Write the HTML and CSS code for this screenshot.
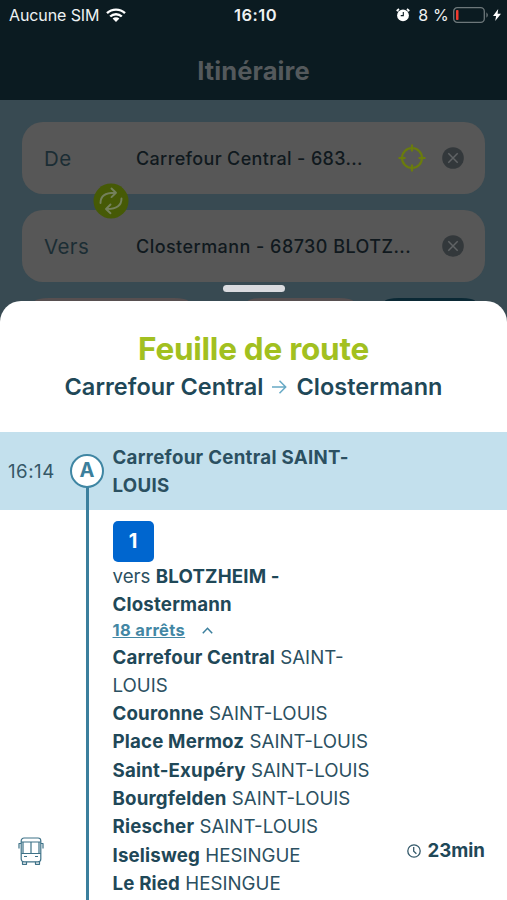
FILE: index.html
```html
<!DOCTYPE html>
<html lang="fr">
<head>
<meta charset="utf-8">
<title>Itinéraire</title>
<link rel="stylesheet" href="styles.css">
</head>
<body>
<div class="app">
  <header class="header">
    <div class="status">
      <div class="status-left">
        <span class="carrier">Aucune SIM</span>
        <svg class="wifi" viewBox="0 0 20 14" width="20" height="14"><g fill="none" stroke="#fff" stroke-width="2.4"><path d="M1 5.2a13 13 0 0 1 18 0"/><path d="M4.2 8.5a8.4 8.4 0 0 1 11.6 0"/></g><path d="M6.6 10.5a4.9 4.9 0 0 1 6.8 0L10 14z" fill="#fff"/></svg>
      </div>
      <span class="clock">16:10</span>
      <div class="status-right">
        <svg width="14" height="14" viewBox="0 0 14 14"><circle cx="7" cy="7.4" r="5.9" fill="#fff"/><path d="M.7 3 3 1M13.3 3 11 1" stroke="#fff" stroke-width="1.7"/><path d="M7.3 4v3.6H4.7" fill="none" stroke="#0b1b21" stroke-width="1.1"/></svg>
        <span class="percent">8 %</span>
        <svg width="37" height="16" viewBox="0 0 37 16"><rect x=".7" y=".7" width="30.6" height="14.6" rx="3.6" fill="none" stroke="#6d777a" stroke-width="1.3"/><rect x="3" y="3" width="2.5" height="10" rx=".8" fill="#f03b2f"/><path d="M33.4 5.2q3 2.8 0 5.6z" fill="#6d777a"/></svg>
        <svg width="8" height="12" viewBox="0 0 8 12"><path d="M5.2 0 0 7h3.1L2.2 12 8 4.7H4.6z" fill="#fff"/></svg>
      </div>
    </div>
    <h1 class="title">Itinéraire</h1>
  </header>

  <section class="search">
    <div class="field">
      <span class="label">De</span>
      <span class="value from">Carrefour Central - 683...</span>
      <svg class="target" width="28" height="28" viewBox="0 0 28 28" fill="none" stroke="#6a7c0d" stroke-width="2.200"><circle cx="14" cy="14" r="10"/><path d="M14 .5v7M14 20.500v7M.5 14h7M20.500 14h7"/></svg>
      <svg width="22" height="22" viewBox="0 0 22 22"><circle cx="11" cy="11" r="10.800" fill="#33383b"/><path d="m6.300 6.300 9.400 9.400m0-9.400-9.400 9.400" stroke="#606365" stroke-width="1.500"/></svg>
    </div>
    <svg class="swap" width="36" height="36" viewBox="0 0 36 36"><circle cx="18" cy="18" r="17.500" fill="#465a06"/><g fill="none" stroke="#74805b" stroke-width="1.900" stroke-linecap="round" stroke-linejoin="round"><path d="M7.500 20C7.500 13 12 9.800 21.500 9.800M18.500 5.500l4.500 4.300-4.500 4.300"/><path d="M28.500 15.500c0 7-4.500 10.500-14.500 10.500M17.500 21.500 13 26l4.500 4.200"/></g></svg>
    <div class="field">
      <span class="label">Vers</span>
      <span class="value">Clostermann - 68730 BLOTZ...</span>
      <svg width="22" height="22" viewBox="0 0 22 22"><circle cx="11" cy="11" r="10.800" fill="#33383b"/><path d="m6.300 6.300 9.400 9.400m0-9.400-9.400 9.400" stroke="#606365" stroke-width="1.500"/></svg>
    </div>
    <div class="options"><i class="chip first"></i><i class="chip second"></i><i class="chip third"></i></div>
    <div class="handle"></div>
  </section>

  <main class="sheet">
    <div class="sheet-head">
      <h2 class="sheet-title">Feuille de route</h2>
      <p class="trip"><span>Carrefour Central</span><svg width="15" height="14" viewBox="0 0 15 14" fill="none" stroke="#67a9c5" stroke-width="1.500"><path d="M0 7h13.500M7.500.8 13.700 7l-6.200 6.200"/></svg><span>Clostermann</span></p>
    </div>
    <div class="row departure">
      <time class="time">16:14</time>
      <div class="rail"><span class="marker">A</span></div>
      <p class="stop-name">Carrefour Central SAINT-<br>LOUIS</p>
    </div>
    <div class="row leg">
      <div class="mode"><svg width="26" height="28" viewBox="0 0 26 28" fill="none" stroke="#3e7288" stroke-width="1.200" stroke-linejoin="round"><rect x="3.200" y="1" width="19.600" height="23.800" rx="2.800"/><path d="M3.200 5h19.600M3.200 16.500h19.600M13 5v11.500M5 5v11.500M21 5v11.500M3.200 6.500H1v5M22.800 6.500H25v5M4.500 24.800v2.500h4v-2.500M17.500 24.800v2.500h4v-2.500M6 19.500h3M17 19.500h3"/></svg></div>
      <div class="rail"></div>
      <div class="details">
        <span class="line-badge">1</span>
        <p class="direction">vers <b>BLOTZHEIM -<br>Clostermann</b></p>
        <div class="toggle"><a class="count">18 arrêts</a><svg width="11" height="7" viewBox="0 0 11 7" fill="none" stroke="#3b7f9d" stroke-width="1.500"><path d="m.8 6.300 4.700-5 4.700 5"/></svg></div>
        <ul class="stops">
          <li><b>Carrefour Central</b> SAINT-<br>LOUIS</li>
          <li><b>Couronne</b> SAINT-LOUIS</li>
          <li><b>Place Mermoz</b> SAINT-LOUIS</li>
          <li><b>Saint-Exupéry</b> SAINT-LOUIS</li>
          <li><b>Bourgfelden</b> SAINT-LOUIS</li>
          <li><b>Riescher</b> SAINT-LOUIS</li>
          <li><b>Iselisweg</b> HESINGUE</li>
          <li><b>Le Ried</b> HESINGUE</li>
        </ul>
      </div>
      <div class="duration"><svg width="14" height="14" viewBox="0 0 14 14" fill="none" stroke="#34596a" stroke-width="1.300"><circle cx="7" cy="7" r="6.200"/><path d="M6.700 3v4.300l2.700 2.500"/></svg><span>23min</span></div>
    </div>
  </main>
</div>
</body>
</html>
```

FILE: styles.css
```css
* { box-sizing: border-box; }
html, body { margin: 0; height: 100%; overflow: hidden; }
h1, h2, p, ul { margin: 0; padding: 0; }
svg { display: block; flex: none; }
body { font-family: Inter, "Liberation Sans", sans-serif; color: #2b5061; }
.app { display: flex; flex-direction: column; height: 900px; width: 507px; overflow: hidden; background: #384a52; }

.header { height: 100px; flex: none; background: #0b1b21; }
.status { display: grid; grid-template-columns: 1fr auto 1fr; height: 30px; align-items: center; padding: 0 6px 0 9px; color: #eef2f3; font-size: 16px; }
.status-left, .status-right { display: flex; align-items: center; }
.status-left { gap: 7px; }
.carrier { letter-spacing: -.1px; }
.clock { padding-left: 1px; font-weight: 600; font-size: 16.500px; letter-spacing: .5px; }
.status-right { justify-content: flex-end; }
.percent { margin: 0 4px 0 8px; white-space: nowrap; letter-spacing: .2px; }
.status-right svg:last-child { margin-left: 3px; }
.title { padding-top: 26px; text-align: center; font-size: 25.500px; line-height: 30px; font-weight: 700; color: #54595c; letter-spacing: .1px; }

.search { position: relative; height: 201px; flex: none; padding: 22px 22px 0; }
.field { display: flex; align-items: center; height: 72px; margin-bottom: 16px; padding: 0 21px 0 22px; border-radius: 21px; background: #575757; }
.label { width: 92px; font-size: 20.500px; color: #1b2d34; letter-spacing: .4px; }
.value { flex: 1; white-space: nowrap; font-size: 18px; font-weight: 500; color: #10191e; letter-spacing: .45px; }
.from { letter-spacing: .35px; }
.target { margin-right: 16px; }
.swap { position: absolute; left: 93px; top: 83px; }
.options { display: flex; height: 3px; padding-left: 13px; }
.chip { border-radius: 14px 14px 0 0 / 3px 3px 0 0; background: #574f50; }
.first { width: 153px; margin-right: 60px; }
.second { width: 105px; margin-right: 32px; }
.third { width: 90px; background: #0b2935; }
.handle { position: absolute; left: 223px; top: 185px; width: 62px; height: 7px; border-radius: 4px; background: #dadbdf; }

.sheet { flex: 1; display: flex; flex-direction: column; min-height: 0; background: #fff; border-radius: 21px 21px 0 0; }
.sheet-head { height: 131px; flex: none; padding-top: 28px; text-align: center; }
.sheet-title { font-size: 31.500px; line-height: 40px; font-weight: 700; letter-spacing: -.25px; color: #a2c020; }
.trip { display: flex; justify-content: center; align-items: center; gap: 9px; margin-top: 4px; font-size: 23.500px; line-height: 28px; font-weight: 600; letter-spacing: .04px; color: #1f4858; }
.row { display: grid; grid-template-columns: 70px 34px 1fr; }
.departure { height: 78px; flex: none; align-items: center; background: #c3e0ed; }
.time { padding-left: 8px; font-size: 18.700px; letter-spacing: .5px; color: #355767; }
.rail { display: flex; justify-content: center; align-items: flex-start; height: 100%; background: linear-gradient(#3b7f9d, #3b7f9d) center top / 3px 100% no-repeat; }
.departure .rail { padding-top: 22px; background-size: 3px 24px; background-position: center bottom; }
.marker { width: 34px; height: 34px; border: 2.500px solid #3f86a3; border-radius: 50%; background: #fff; color: #3c7f9c; font-size: 20px; line-height: 29px; font-weight: 700; text-align: center; }
.stop-name, .details { padding-left: 8.500px; }
.stop-name { padding-top: 2px; font-size: 18.700px; font-weight: 700; line-height: 28.300px; letter-spacing: .28px; }
.leg { flex: none; height: 390px; grid-template-columns: 70px 34px 1fr auto; }
.mode { padding: 327px 0 0 18px; }
.details { padding-top: 11px; font-size: 18.700px; line-height: 28.300px; white-space: nowrap; }
.line-badge { display: block; width: 41px; height: 41px; margin-bottom: 1px; border-radius: 5px; background: #0066cf; color: #fff; font-size: 20px; line-height: 41px; font-weight: 700; text-align: center; }
.direction b, .stops b { font-weight: 700; letter-spacing: .17px; color: #1f4858; }
.toggle { display: flex; align-items: center; height: 24px; padding-bottom: 3px; gap: 17px; }
.count { font-size: 16.500px; line-height: 21px; font-weight: 700; letter-spacing: .35px; color: #4387a4; text-decoration: underline; }
.stops { list-style: none; }
.duration { display: flex; align-items: center; align-self: start; gap: 6px; margin: 327px 22px 0 0; font-size: 18.700px; line-height: 28px; font-weight: 700; color: #1f4858; }
```
